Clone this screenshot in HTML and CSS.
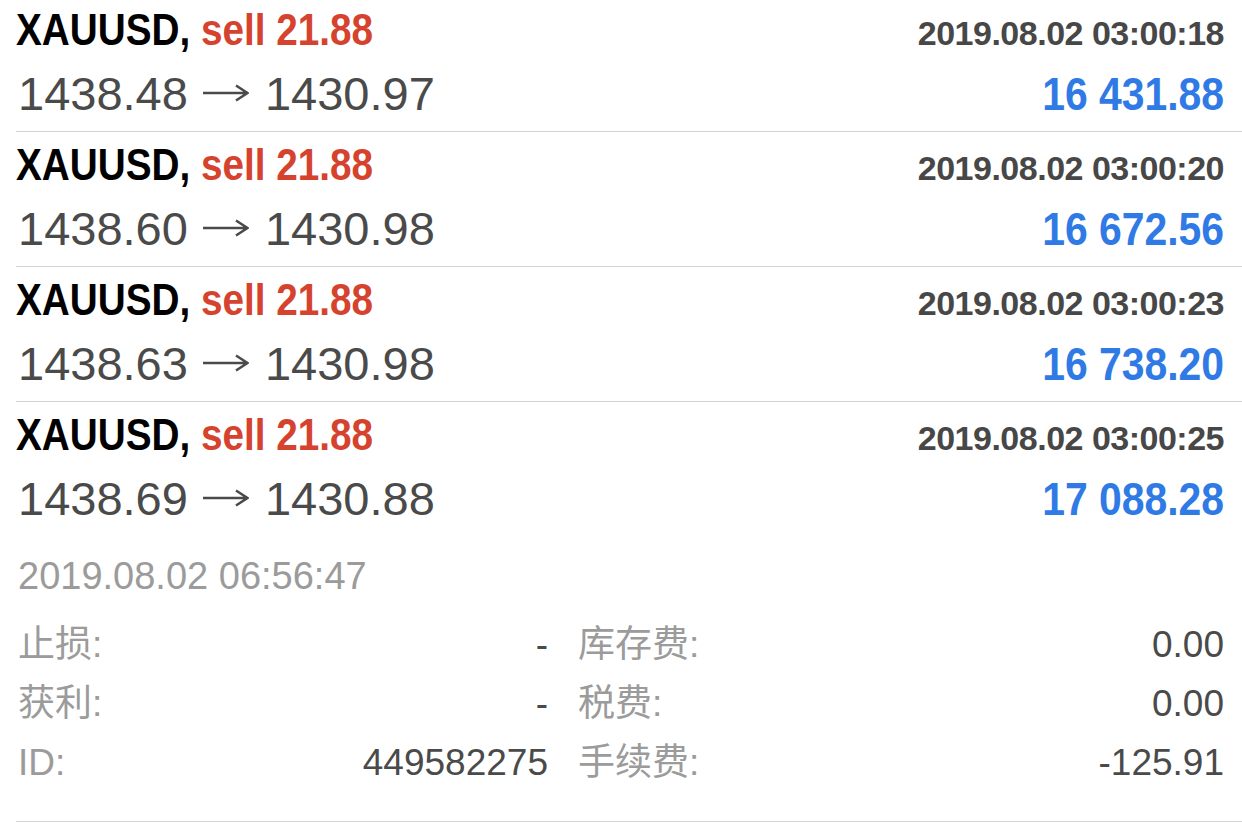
FILE: index.html
```html
<!DOCTYPE html>
<html lang="zh-CN">
<head>
    <meta charset="UTF-8">
    <meta name="viewport" content="width=device-width, initial-scale=1.0">
    <title>Deals</title>
    <link rel="stylesheet" href="styles.css">
</head>
<body>
    <section class="deals">
        <div class="deal">
            <div class="line">
                <span class="symbol">XAUUSD, <span class="sell">sell 21.88</span></span>
                <span class="time">2019.08.02 03:00:18</span>
            </div>
            <div class="line">
                <span class="prices">1438.48<svg class="arrow" viewBox="0 0 46 18" aria-label="→"><path d="M0 9H44M33 1.5L44.5 9L33 16.5"/></svg>1430.97</span>
                <span class="profit">16 431.88</span>
            </div>
        </div>
        <div class="deal">
            <div class="line">
                <span class="symbol">XAUUSD, <span class="sell">sell 21.88</span></span>
                <span class="time">2019.08.02 03:00:20</span>
            </div>
            <div class="line">
                <span class="prices">1438.60<svg class="arrow" viewBox="0 0 46 18" aria-label="→"><path d="M0 9H44M33 1.5L44.5 9L33 16.5"/></svg>1430.98</span>
                <span class="profit">16 672.56</span>
            </div>
        </div>
        <div class="deal">
            <div class="line">
                <span class="symbol">XAUUSD, <span class="sell">sell 21.88</span></span>
                <span class="time">2019.08.02 03:00:23</span>
            </div>
            <div class="line">
                <span class="prices">1438.63<svg class="arrow" viewBox="0 0 46 18" aria-label="→"><path d="M0 9H44M33 1.5L44.5 9L33 16.5"/></svg>1430.98</span>
                <span class="profit">16 738.20</span>
            </div>
        </div>
        <div class="deal">
            <div class="line">
                <span class="symbol">XAUUSD, <span class="sell">sell 21.88</span></span>
                <span class="time">2019.08.02 03:00:25</span>
            </div>
            <div class="line">
                <span class="prices">1438.69<svg class="arrow" viewBox="0 0 46 18" aria-label="→"><path d="M0 9H44M33 1.5L44.5 9L33 16.5"/></svg>1430.88</span>
                <span class="profit">17 088.28</span>
            </div>
        </div>
    </section>

    <section class="summary">
        <p class="closed">2019.08.02 06:56:47</p>
        <div class="details">
            <div class="item"><span class="label">止损:</span><span class="value">-</span></div>
            <div class="item"><span class="label">库存费:</span><span class="value">0.00</span></div>
            <div class="item"><span class="label">获利:</span><span class="value">-</span></div>
            <div class="item"><span class="label">税费:</span><span class="value">0.00</span></div>
            <div class="item"><span class="label">ID:</span><span class="value">449582275</span></div>
            <div class="item"><span class="label">手续费:</span><span class="value">-125.91</span></div>
        </div>
    </section>
</body>
</html>
```

FILE: styles.css
```css
body {
    margin: 0;
    background-color: #ffffff;
    font-family: "Liberation Sans", Arial, "Noto Sans CJK SC", sans-serif;
    overflow: hidden;
}

.deals {
    margin-top: -3px;
}

.deal {
    margin-left: 16px;
    padding: 3px 18px 3px 0;
    height: 128px;
    border-bottom: 1px solid #d2d2d2;
}

.deal:last-child {
    border-bottom-color: transparent;
}

.line {
    display: flex;
    justify-content: space-between;
    align-items: baseline;
}

.line:first-child {
    height: 60px;
    line-height: 60px;
}

.line:last-child {
    height: 68px;
    line-height: 68px;
}

/* fonte condensada nao existe aqui, entao estreita a Liberation */
.symbol {
    display: inline-block;
    font-weight: bold;
    font-size: 45px;
    color: #000;
    transform: scaleX(0.86);
    transform-origin: left center;
}

.sell {
    color: #d5432f;
}

.time {
    font-weight: bold;
    font-size: 34px;
    color: #474747;
    letter-spacing: -0.5px;
}

.prices {
    font-size: 47px;
    color: #4a4a4a;
    margin-left: 2px;
}

.arrow {
    width: 46px;
    height: 18px;
    margin: 0 16px 0 15px;
    vertical-align: 8px;
    fill: none;
    stroke: #4a4a4a;
    stroke-width: 2.6;
}

.profit {
    display: inline-block;
    font-weight: bold;
    font-size: 47px;
    color: #2f7ae5;
    transform: scaleX(0.87);
    transform-origin: right center;
}

.summary {
    margin-left: 16px;
    padding: 14px 18px 29px 2px;
    border-bottom: 1px solid #d2d2d2;
}

.closed {
    margin: 0 0 14px;
    font-size: 38px;
    line-height: 50px;
    color: #9b9b9b;
}

.details {
    display: grid;
    grid-template-columns: 530px 1fr;
    column-gap: 30px;
}

.item {
    display: flex;
    justify-content: space-between;
    font-size: 37px;
    line-height: 59px;
}

.label {
    color: #9b9b9b;
}

.value {
    color: #4a4a4a;
}
```
